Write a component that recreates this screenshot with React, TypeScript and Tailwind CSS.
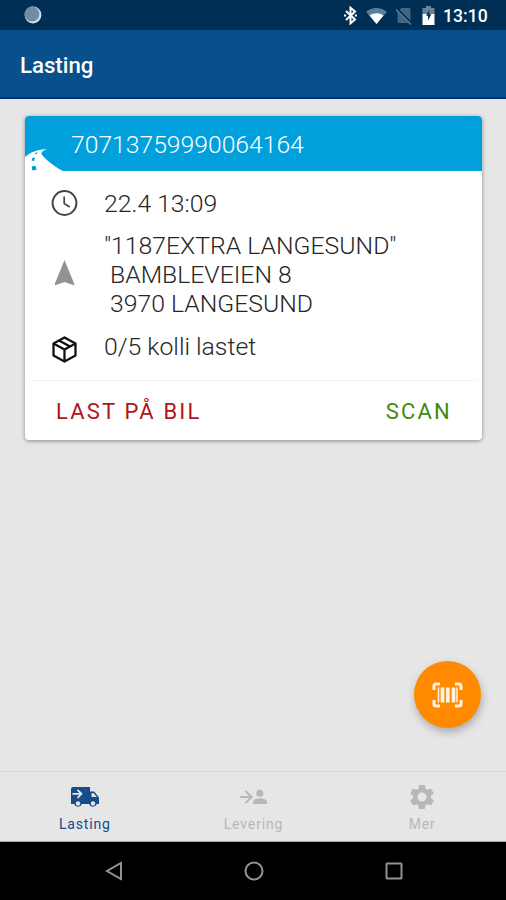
import type { ReactNode } from "react";
import clsx from "clsx";

interface Delivery {
  id: string;
  time: string;
  address: string[];
  status: string;
}

const delivery: Delivery = {
  id: "70713759990064164",
  time: "22.4 13:09",
  address: ['"1187EXTRA LANGESUND"', "BAMBLEVEIEN 8", "3970 LANGESUND"],
  status: "0/5 kolli lastet",
};

function StatusBar() {
  return (
    <div className="flex h-[30px] items-center bg-[#002f55] pl-6 pr-[19px]">
      <svg className="h-[18px] w-[18px]" viewBox="0 0 18 18">
        <circle cx="9" cy="9" r="8.4" fill="#d3dde6" />
        <circle cx="8" cy="8" r="7.4" fill="#6f8da6" />
      </svg>
      <div className="ml-auto flex items-center">
        <svg className="mr-[9px] h-[19px] w-[13px]" viewBox="0 0 13 18" fill="none" stroke="#fff" strokeWidth="2">
          <path d="M2 4.500 11 13 6.500 16.800V1.200L11 5 2 13.500" />
          <path d="M0 9h2.200M10.800 9H13" strokeWidth="2" />
        </svg>
        <svg className="mr-[9px] mt-px h-4 w-[21px]" viewBox="0 0 22 17">
          <path d="M11 17 0 4.200C6 -1.400 16 -1.400 22 4.200z" fill="#5f7e98" />
          <path d="M11 17 3.600 8.100C8 4.800 14 4.800 18.400 8.100z" fill="#fff" />
        </svg>
        <svg className="mr-[10px] mt-px h-[18px] w-4" viewBox="0 0 16 18">
          <path d="M5.500 1H13a1.500 1.500 0 0 1 1.500 1.500V16H3a1.500 1.500 0 0 1-1.500-1.500V5z" fill="#456681" />
          <path d="M1 2.300 15.500 17" stroke="#002f55" strokeWidth="3" />
          <path d="M0 2.500 15 17.500" stroke="#5f7d96" strokeWidth="1.500" />
        </svg>
        <svg className="mr-[8px] mt-px h-[19px] w-[13px]" viewBox="0 0 13 19">
          <path d="M4 0h5v2h3.500v6H.5V2H4z" fill="#688299" />
          <path d="M.5 8h12v11H.5z" fill="#fff" />
          <path d="M7.300 4 4 9.800h2v4.700l3.400-6.200H7.300z" fill="#002f55" />
        </svg>
        <span className="w-[44px] pt-[3px] text-[17.600px] font-medium leading-none text-white">13:10</span>
      </div>
    </div>
  );
}

function Header() {
  return (
    <header className="flex h-[69px] items-center border-b-2 border-[#062b78] bg-[#07508c] pl-[20px] pt-1">
      <h1 className="text-[22.200px] font-medium leading-none text-white">Lasting</h1>
    </header>
  );
}

function InfoRow({ icon, children, className }: { icon: ReactNode; children: ReactNode; className?: string }) {
  return (
    <div className={clsx("flex items-center", className)}>
      <div className="flex w-[79px] shrink-0 justify-center">{icon}</div>
      <div>{children}</div>
    </div>
  );
}

function DeliveryCard() {
  return (
    <section className="ml-[25px] mr-6 mt-[17px] h-[324px] overflow-hidden rounded-[4px] bg-white shadow-[0_1px_4px_rgba(0,0,0,0.4)]">
      <div className="relative flex h-[55px] items-center bg-[#00a0dc] pl-[46px] pt-[3px]">
        <span className="text-[24.700px] font-light leading-none text-white">{delivery.id}</span>
        <svg className="absolute bottom-0 left-0 h-[23px] w-[40px]" viewBox="0 0 40 23">
          <path d="M0 9C5 4.500 12 1.500 22.500 1c-5 1.400-7.500 3.500-5 6.500C21.500 12 29 18.500 38 23H0z" fill="#fff" />
          <path d="M9.300 5.500 12.500 4l-1 2.200zM7.300 10l2.700-.5-.7 3.500-2.700-.5zM6.800 18.300l3.800-.4.900 4-4.400.3z" fill="#009bd8" />
        </svg>
      </div>
      <div className="h-[209px] pt-[18px] text-[24.760px] font-light leading-[29px] text-[#262626]">
        <InfoRow
          className="h-[29px]"
          icon={
            <svg className="-mt-px h-7 w-7" viewBox="0 0 28 28" fill="none" stroke="#444" strokeWidth="2">
              <circle cx="13.500" cy="14" r="11.900" />
              <path d="M13.200 7.500v7l5.600 3.400" strokeWidth="1.700" />
            </svg>
          }
        >
          {delivery.time}
        </InfoRow>
        <InfoRow
          className="mt-[13px] h-[87px]"
          icon={
            <svg className="-mt-[3px] h-[26px] w-[20px]" viewBox="0 0 20 26">
              <path d="M9.500 0 19.500 24.500l-.8.700L9.500 22 .3 25.200-.5 24.500z" fill="#929292" />
            </svg>
          }
        >
          {delivery.address.map((line, i) => (
            <p key={line} className={clsx("whitespace-nowrap", i > 0 && "pl-[6px]")}>
              {line}
            </p>
          ))}
        </InfoRow>
        <InfoRow
          className="mt-[13px] h-[30px]"
          icon={
            <svg className="mt-1.5 h-[27px] w-[25px]" viewBox="0 0 25 27" fill="none" stroke="#111" strokeWidth="2.300" strokeLinejoin="round">
              <path d="M12.500 1.500 23.500 7.400v12.200l-11 5.900-11-5.900V7.400z" />
              <path d="M1.500 7.400 12.500 13.400 23.500 7.400M12.500 13.400V25.500M7 4.500l11 6" />
            </svg>
          }
        >
          {delivery.status}
        </InfoRow>
      </div>
      <div className="mx-1 flex h-[60px] items-center justify-between border-t border-[#f3f3f3] pl-[27px] pr-[26px] pt-[2px] text-[22px] leading-none">
        <button className="tracking-[2.200px] text-[#b21419]">LAST PÅ BIL</button>
        <button className="tracking-[2.200px] text-[#43890f]">SCAN</button>
      </div>
    </section>
  );
}

function ScanButton() {
  return (
    <button className="absolute bottom-[43px] right-[25px] flex h-[67px] w-[67px] items-center justify-center rounded-full bg-[#ff8a00] shadow-[1px_4px_8px_rgba(0,0,0,0.26)]">
      <svg className="h-[26px] w-[31px]" viewBox="0 0 31 26" fill="none" stroke="#fff3e2">
        <path d="M2 8V4a2 2 0 0 1 2-2h4M23 2h4a2 2 0 0 1 2 2v4M29 18v4a2 2 0 0 1-2 2h-4M8 24H4a2 2 0 0 1-2-2v-4" strokeWidth="3" />
        <path d="M6.500 5.500v15M25 5.500v15" strokeWidth="1.500" />
        <path d="M10.500 5.500v15M15.800 5.500v15M21.500 5.500v15" strokeWidth="3.700" />
      </svg>
    </button>
  );
}

function Tab({ label, active, children }: { label: string; active?: boolean; children: ReactNode }) {
  return (
    <button className={clsx("flex flex-1 flex-col items-center pt-[11px]", active ? "text-[#174b8b]" : "text-[#b7b7b7]")}>
      <span className="flex h-7 items-center">{children}</span>
      <span className="mt-[5px] pl-px text-[14px] leading-4 tracking-[0.850px]">{label}</span>
    </button>
  );
}

function TabBar() {
  return (
    <nav className="flex h-[71px] shrink-0 border-b border-t border-b-[#aaa] border-t-[#dadada] bg-[#e6e6e6]">
      <Tab label="Lasting" active>
        <svg className="ml-px h-[21px] w-[28px]" viewBox="0 0 28 21" fill="currentColor">
          <path d="M1.500 0H19v4.500h4.200L28 10.500V17h-2.200a4 4 0 0 1-7.600 0h-7.400a4 4 0 0 1-7.600 0H0V2A2 2 0 0 1 1.500 0z" />
          <path d="M1.500 6.800h9M6.500 2.800l4 4-4 4" fill="none" stroke="#e6e6e6" strokeWidth="1.800" />
          <path d="M20.500 6.300h2.300l3 3.800h-5.300z" fill="#e6e6e6" />
          <circle cx="7" cy="16.500" r="2.200" fill="#e6e6e6" />
          <circle cx="22" cy="16.500" r="2.200" fill="#e6e6e6" />
        </svg>
      </Tab>
      <Tab label="Levering">
        <svg className="h-[16px] w-[27px]" viewBox="0 0 27 16">
          <path d="M0 8h11M5.500 1.800 11.700 8l-6.200 6.200" fill="none" stroke="currentColor" strokeWidth="1.900" />
          <circle cx="19.800" cy="4.200" r="3.500" fill="currentColor" />
          <path d="M13 15v-1.800c0-2.400 4-3.900 7-3.900s7 1.500 7 3.900V15z" fill="currentColor" />
        </svg>
      </Tab>
      <Tab label="Mer">
        <svg className="h-[30px] w-[30px]" viewBox="0 0 24 24" fill="currentColor">
          <path d="M19.140 12.940c.04-.3.060-.61.060-.94 0-.32-.02-.64-.07-.94l2.030-1.580c.18-.14.230-.41.120-.61l-1.920-3.320c-.12-.22-.37-.29-.59-.22l-2.390.96c-.5-.38-1.030-.7-1.620-.94l-.36-2.540c-.04-.24-.24-.41-.48-.41h-3.840c-.24 0-.43.170-.47.410l-.36 2.540c-.59.240-1.130.570-1.620.940l-2.390-.96c-.22-.08-.47 0-.59.220L2.740 8.870c-.12.210-.08.470.120.610l2.030 1.580c-.05.300-.09.630-.09.940s.02.640.07.940l-2.030 1.580c-.18.140-.23.410-.12.610l1.920 3.320c.12.220.37.290.59.220l2.390-.96c.5.380 1.030.7 1.620.94l.36 2.540c.05.240.240.410.480.410h3.840c.24 0 .44-.17.470-.41l.36-2.540c.59-.24 1.130-.56 1.620-.94l2.390.96c.22.080.470 0 .59-.22l1.920-3.320c.12-.22.070-.47-.12-.61l-2.010-1.580zM12 15.600c-1.980 0-3.600-1.620-3.600-3.600s1.620-3.600 3.600-3.600 3.600 1.620 3.600 3.600-1.620 3.600-3.600 3.600z" />
        </svg>
      </Tab>
    </nav>
  );
}

function NavigationBar() {
  return (
    <div className="flex h-[58px] shrink-0 items-center justify-between bg-black pl-[104px] pr-[103px]">
      <svg className="h-5 w-[19px]" viewBox="0 0 19 20" fill="none" stroke="#929292" strokeWidth="2">
        <path d="M17 2v16L3 10z" />
      </svg>
      <svg className="h-5 w-5" viewBox="0 0 20 20" fill="none" stroke="#929292" strokeWidth="2">
        <circle cx="10" cy="10" r="8.500" />
      </svg>
      <svg className="h-[18px] w-[18px]" viewBox="0 0 18 18" fill="none" stroke="#929292" strokeWidth="2">
        <rect x="1.500" y="1.500" width="15" height="15" rx="0.500" />
      </svg>
    </div>
  );
}

export default function App() {
  return (
    <div className="flex h-[900px] w-[506px] flex-col overflow-hidden bg-[#e6e6e6] font-['Roboto',sans-serif]">
      <StatusBar />
      <Header />
      <main className="relative flex-1">
        <DeliveryCard />
        <ScanButton />
      </main>
      <TabBar />
      <NavigationBar />
    </div>
  );
}
